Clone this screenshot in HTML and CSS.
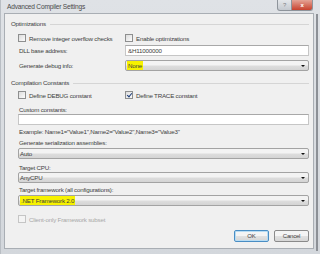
FILE: index.html
```html
<!DOCTYPE html>
<html>
    <head>
        <title>Advanced Compiler Settings</title>
        <link rel="stylesheet" href="styles.css">
    </head>
    <body>
        <div class="window">
            <div class="titlebar">
                <span class="title">Advanced Compiler Settings</span>
                <div class="caption-buttons">
                    <div class="help cap">?</div>
                    <div class="close cap">x</div>
                </div>
            </div>
            <div class="client">
                <div class="group">Optimizations</div>
                <div class="row checks r-opt">
                    <label class="check col1"><span class="box"></span>Remove integer overflow checks</label>
                    <label class="check"><span class="box"></span>Enable optimizations</label>
                </div>
                <div class="row field r-dll">
                    <span class="label">DLL base address:</span>
                    <div class="textbox">&amp;H11000000</div>
                </div>
                <div class="row field r-debug">
                    <span class="label">Generate debug info:</span>
                    <div class="combo"><span class="hl">None</span><span class="arrow"></span></div>
                </div>

                <div class="group r-comp">Compilation Constants</div>
                <div class="row checks r-def">
                    <label class="check col1"><span class="box"></span>Define DEBUG constant</label>
                    <label class="check"><span class="box checked"></span>Define TRACE constant</label>
                </div>
                <div class="inner">
                    <div class="caption r-custom">Custom constants:</div>
                    <div class="textbox wide"></div>
                    <div class="caption r-example">Example: Name1="Value1",Name2="Value2",Name3="Value3"</div>
                    <div class="caption r-ser">Generate serialization assemblies:</div>
                    <div class="combo wide"><span>Auto</span><span class="arrow"></span></div>
                    <div class="caption r-cpu">Target CPU:</div>
                    <div class="combo wide"><span>AnyCPU</span><span class="arrow"></span></div>
                    <div class="caption r-fw">Target framework (all configurations):</div>
                    <div class="combo wide"><span class="hl">.NET Framework 2.0</span><span class="arrow"></span></div>
                    <label class="check disabled r-client"><span class="box"></span>Client-only Framework subset</label>
                </div>
                <div class="buttons">
                    <div class="btn default">OK</div>
                    <div class="btn">Cancel</div>
                </div>
            </div>
        </div>
    </body>
</html>
```

FILE: styles.css
```css
body {
    margin: 0;
    background: #e8eaed;
    font-family: "Liberation Sans", "DejaVu Sans", sans-serif;
    font-size: 6.2px;
    letter-spacing: -0.2px;
    color: #3e3e3e;
}
.window {
    width: 320px;
    height: 254px;
    box-sizing: border-box;
    background: linear-gradient(#dfe2e6, #d3d7dc);
    border-left: 1px solid #b9bec4;
    padding: 0 6px 5px 3px;
    display: flex;
    flex-direction: column;
    position: relative;
}
.window::after {
    content: "";
    position: absolute;
    right: 2px;
    top: 14px;
    bottom: 3px;
    width: 2px;
    background: #8c9096;
}
.titlebar {
    height: 13px;
    display: flex;
    align-items: flex-start;
    justify-content: space-between;
}
.title {
    font-size: 6.6px;
    color: #4a4a4a;
    padding: 3px 0 0 3px;
}
.caption-buttons {
    display: flex;
    margin-right: 1px;
}
.cap {
    height: 11px;
    line-height: 10px;
    text-align: center;
    font-size: 6px;
    color: #fff;
    border: 1px solid #8e949b;
    border-top: 0;
    box-sizing: border-box;
}
.help {
    width: 15px;
    background: linear-gradient(#e4e7ea, #c4c9cf);
    color: #7d8288;
    border-radius: 0 0 0 3px;
}
.close {
    width: 21px;
    background: linear-gradient(#e4a395, #c8422e);
    border-left: 0;
    border-radius: 0 0 3px 0;
    font-weight: bold;
}
.client {
    flex: 1;
    background: #f0f0f0;
    border: 1px solid #a9aeb4;
    padding: 5px 4px 0 6px;
    display: flex;
    flex-direction: column;
}
.group {
    height: 10px;
    line-height: 10px;
    display: flex;
    align-items: center;
    gap: 4px;
}
.group::after {
    content: "";
    flex: 1;
    height: 1px;
    background: #d5d5d5;
}
.row {
    display: flex;
    align-items: center;
    padding-left: 7px;
}
.checks {
    height: 10px;
}
.check {
    display: flex;
    align-items: center;
    gap: 3px;
    height: 10px;
}
.col1 {
    width: 107px;
}
.box {
    width: 6px;
    height: 6px;
    border: 1px solid #8e8f8f;
    background: linear-gradient(135deg, #dcdcdc, #fbfbfb);
    position: relative;
}
.checked::after {
    content: "";
    position: absolute;
    left: 2px;
    top: 0;
    width: 2px;
    height: 4px;
    border: solid #1c3d7a;
    border-width: 0 1px 1px 0;
    transform: rotate(40deg);
}
.field {
    height: 11px;
    padding-left: 8px;
}
.label {
    width: 106px;
}
.textbox {
    flex: 1;
    height: 11px;
    box-sizing: border-box;
    background: #fff;
    border: 1px solid #c6c6c6;
    border-top-color: #a8a8a8;
    padding-left: 2px;
    line-height: 9px;
}
.combo {
    flex: 1;
    height: 11px;
    box-sizing: border-box;
    background: linear-gradient(#f3f3f3 45%, #dddddd 55%, #d4d4d4);
    border: 1px solid #a3a3a3;
    border-radius: 2px;
    display: flex;
    align-items: center;
    justify-content: space-between;
    padding: 0 3px 0 1px;
}
.hl {
    background: #f7f200;
    padding: 1px 1px;
}
.arrow {
    width: 0;
    height: 0;
    border-left: 2px solid transparent;
    border-right: 2px solid transparent;
    border-top: 2px solid #111;
}
.r-opt { margin-top: 4px; }
.r-dll { margin-top: 2px; }
.r-debug { margin-top: 4px; }
.r-comp { margin-top: 7px; }
.r-def { margin-top: 2px; }
.inner {
    padding-left: 7px;
    display: flex;
    flex-direction: column;
}
.caption {
    height: 9px;
    line-height: 9px;
    padding-left: 1px;
}
.wide {
    flex: none;
}
.r-custom { margin-top: 5px; }
.r-example { margin-top: 2px; }
.r-ser { margin-top: 2px; margin-bottom: 1px; }
.r-cpu { margin-top: 4px; }
.r-fw { margin-top: 2px; margin-bottom: 1px; }
.r-client { margin-top: 8px; }
.disabled {
    color: #a8a8a8;
}
.disabled .box {
    border-color: #c5c5c5;
    background: #f4f4f4;
}
.buttons {
    display: flex;
    justify-content: flex-end;
    gap: 5px;
    margin-top: 6px;
}
.btn {
    width: 35px;
    height: 12px;
    box-sizing: border-box;
    border: 1px solid #8a8a8a;
    border-radius: 2px;
    background: linear-gradient(#f4f4f4 45%, #e0e0e0 55%, #d6d6d6);
    text-align: center;
    line-height: 10px;
    font-size: 6px;
}
.default {
    border-color: #4a8ec4;
    box-shadow: inset 0 0 0 1px #b8dcf3;
}
```
